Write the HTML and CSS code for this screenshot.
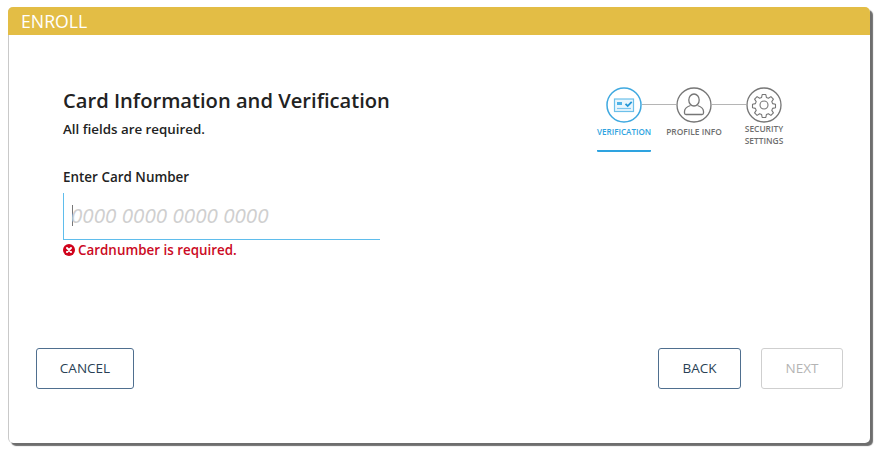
FILE: index.html
```html
<!DOCTYPE html>
<html lang="en">
<head>
<meta charset="utf-8">
<title>Enroll</title>
<link rel="stylesheet" href="styles.css">
</head>
<body>
<main class="card">
  <header class="card-head">ENROLL</header>
  <div class="card-body">
    <section class="form">
      <h1 class="title">Card Information and Verification</h1>
      <p class="subtitle">All fields are required.</p>
      <label class="label" for="cardnum">Enter Card Number</label>
      <div class="field">
        <span class="caret"></span>
        <span class="placeholder" id="cardnum">0000 0000 0000 0000</span>
      </div>
      <div class="error">
        <svg class="error-icon" viewBox="0 0 12 12" width="12" height="12"><circle cx="6" cy="6" r="6" fill="#d0021b"/><path d="M4 4l4 4M8 4l-4 4" stroke="#fff" stroke-width="2" stroke-linecap="round"/></svg>
        <span>Cardnumber is required.</span>
      </div>
    </section>
    <nav class="steps">
      <div class="track">
        <svg class="step-icon" viewBox="0 0 36 36" width="36" height="36">
          <circle cx="18" cy="18" r="17" fill="#fff" stroke="#3fa9e0" stroke-width="1.500"/>
          <rect x="8.500" y="12" width="19" height="12.500" fill="#e9f6fd" stroke="#6cc0ea" stroke-width="1.200"/>
          <rect x="11" y="15" width="5" height="3" fill="#4fb2e6"/>
          <path d="M19.500 16.800l2.200 2.200 4-4.200" fill="none" stroke="#2496d6" stroke-width="1.800"/>
          <path d="M11 21.500h14" stroke="#7cc6ee" stroke-width="1.200"/>
        </svg>
        <span class="link"></span>
        <svg class="step-icon" viewBox="0 0 36 36" width="36" height="36">
          <circle cx="18" cy="18" r="17" fill="#fff" stroke="#767676" stroke-width="1.300"/>
          <ellipse cx="18" cy="13" rx="5.200" ry="6" fill="none" stroke="#767676" stroke-width="1.300"/>
          <path d="M14.500 18.500c-3 1-6 2.500-6 6v1.500a1.500 1.500 0 0 0 1.500 1.500h16a1.500 1.500 0 0 0 1.500-1.500v-1.500c0-3.500-3-5-6-6" fill="none" stroke="#767676" stroke-width="1.300"/>
        </svg>
        <span class="link"></span>
        <svg class="step-icon" viewBox="0 0 36 36" width="36" height="36">
          <circle cx="18" cy="18" r="17" fill="#fff" stroke="#767676" stroke-width="1.300"/>
          <path d="M16.200 7.500h3.600l.6 2.900 2 .8 2.500-1.600 2.500 2.500-1.600 2.500.8 2 2.900.6v3.600l-2.900.6-.8 2 1.600 2.500-2.500 2.500-2.500-1.600-2 .8-.6 2.900h-3.600l-.6-2.900-2-.8-2.500 1.600-2.500-2.500 1.600-2.500-.8-2-2.900-.6v-3.600l2.900-.6.8-2-1.600-2.500 2.500-2.500 2.500 1.600 2-.8z" fill="none" stroke="#767676" stroke-width="1.100" stroke-linejoin="round"/>
          <circle cx="18" cy="18" r="4" fill="none" stroke="#767676" stroke-width="1.100"/>
        </svg>
      </div>
      <div class="step-labels">
        <div class="step-label is-active">VERIFICATION</div>
        <div class="step-label">PROFILE INFO</div>
        <div class="step-label">SECURITY SETTINGS</div>
      </div>
    </nav>
  </div>
  <footer class="card-foot">
    <button class="btn btn-cancel" type="button">CANCEL</button>
    <div class="foot-right">
      <button class="btn btn-back" type="button">BACK</button>
      <button class="btn btn-next" type="button" disabled>NEXT</button>
    </div>
  </footer>
</main>
</body>
</html>
```
FILE: styles.css
```css
* { box-sizing: border-box; }
html, body { margin: 0; height: 100%; background: #fff; }
body {
  padding: 7px 0 0 8px;
  font-family: "Open Sans", "Liberation Sans", sans-serif;
  color: #222;
  overflow: hidden;
}
.card {
  width: 862px;
  height: 436px;
  background: #fff;
  border-radius: 5px;
  border-left: 1px solid #c9c9c9;
  box-shadow: 3px 3px 1px #6e6e6e;
  display: flex;
  flex-direction: column;
}
.card-head {
  height: 28px;
  margin-left: -1px;
  padding-left: 13px;
  background: #e3bd45;
  border-radius: 5px 5px 0 0;
  color: #fff;
  font-size: 17.700px;
  line-height: 28px;
}
.card-body {
  flex: 1;
  display: flex;
  justify-content: space-between;
  padding: 52px 0 0 54px;
}
.form { width: 317px; }
.title {
  margin: 0;
  font-size: 20.150px;
  font-weight: 600;
  line-height: 27px;
  white-space: nowrap;
}
.subtitle {
  margin: 5px 0 0;
  font-size: 13.350px;
  font-weight: 600;
  line-height: 20px;
}
.label {
  display: block;
  margin-top: 28px;
  font-size: 13.450px;
  font-weight: 600;
  line-height: 20px;
}
.field {
  display: flex;
  align-items: center;
  height: 47px;
  margin-top: 6px;
  padding-left: 8px;
  border-left: 1px solid #5fbdec;
  border-bottom: 1px solid #5fbdec;
}
.caret {
  width: 1px;
  height: 21px;
  margin-top: -1px;
  background: #777;
}
.placeholder {
  margin: -2px 0 0 -2px;
  font-size: 20.600px;
  font-style: italic;
  color: #cfcfcf;
  white-space: nowrap;
}
.error {
  display: flex;
  align-items: center;
  gap: 3px;
  margin-top: 1px;
  color: #cb0a24;
  font-size: 13.400px;
  font-weight: 600;
  line-height: 19px;
}
.error-icon { flex: none; margin-top: -1px; }
.steps {
  width: 210px;
  margin-right: 71px;
  margin-top: -1px;
}
.track {
  display: flex;
  align-items: center;
  padding-left: 17px;
  height: 37px;
}
.step-icon { flex: none; display: block; }
.link {
  width: 34px;
  height: 1px;
  background: #b5b5b5;
}
.step-labels {
  display: grid;
  grid-template-columns: 70px 70px 70px;
  margin-top: 3px;
}
.step-label {
  font-size: 8.400px;
  font-weight: 600;
  line-height: 12px;
  color: #6f6f6f;
  text-align: center;
}
.step-label:nth-child(3) { padding: 0 12px; margin-top: -3px; }
.step-label.is-active {
  margin: 0 8px;
  padding-bottom: 12px;
  color: #2ea3e0;
  border-bottom: 2px solid #2ea3e0;
  border-radius: 1px;
  font-size: 8.100px;
  white-space: nowrap;
}
.card-foot {
  display: flex;
  justify-content: space-between;
  padding: 0 27px 54px 27px;
}
.foot-right { display: flex; gap: 20px; }
.btn {
  height: 41px;
  background: #fff;
  border: 1px solid #4f6f8f;
  border-radius: 3px;
  color: #2a3f55;
  font-family: inherit;
  font-size: 13.500px;
  padding: 0 0 2px;
}
.btn-cancel { width: 98px; }
.btn-back { width: 83px; }
.btn-next {
  width: 82px;
  border-color: #cfcfcf;
  color: #b4b4b4;
}
```
